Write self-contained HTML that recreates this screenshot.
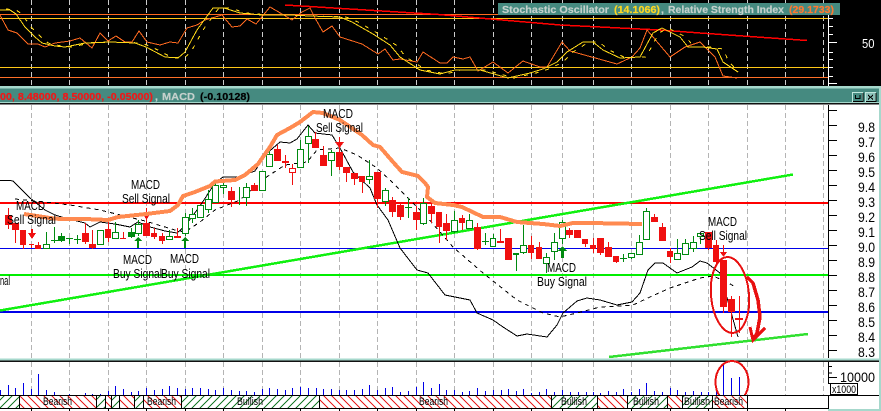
<!DOCTYPE html>
<html><head><meta charset="utf-8"><style>
html,body{margin:0;padding:0;background:#fff;width:881px;height:411px;overflow:hidden}
svg{display:block;shape-rendering:crispEdges}
text{font-family:"Liberation Sans",sans-serif}
.c{fill:#000;font-size:12.5px}
.a{fill:#000;font-size:14px}
.t{font-size:10.5px;font-weight:bold;fill:currentColor;stroke:currentColor;stroke-width:.2px}
.s{fill:#000;font-size:11px}
</style></head><body>
<svg width="881" height="411" viewBox="0 0 881 411" xmlns="http://www.w3.org/2000/svg">
<defs>
<pattern id="bull" patternUnits="userSpaceOnUse" width="8" height="8"><path d="M-1 9L9 -1M-1 1L1 -1M7 9L9 7" stroke="#1a7a2a" stroke-width="1"/></pattern>
<pattern id="bear" patternUnits="userSpaceOnUse" width="8" height="8"><path d="M-1 -1L9 9M-1 7L1 9M7 -1L9 1" stroke="#e82020" stroke-width="1"/></pattern>
</defs>
<rect width="881" height="411" fill="#fff"/>
<!-- top pane -->
<rect width="881" height="86" fill="#000"/>
<path d="M31.5 0V86M69.5 0V86M108.5 0V86M146.5 0V86M185.5 0V86M223.5 0V86M262.5 0V86M300.5 0V86M339.5 0V86M377.5 0V86M416.5 0V86M454.5 0V86M493.5 0V86M531.5 0V86M562.5 0V86M593.5 0V86M631.5 0V86M670.5 0V86M708.5 0V86M747.5 0V86M785.5 0V86M823.5 0V86" stroke="#ccc" stroke-dasharray="5 3" fill="none"/>
<path d="M0 14.5H828" stroke="#ff6a20"/>
<path d="M0 18.5H828M0 67.5H828" stroke="#ffc818"/>
<path d="M0 77.5H828" stroke="#ff7028"/>
<path d="M285 5L440 14.6L560 25L660 30L700 33L807 40.5" stroke="#f00" stroke-width="1.5" fill="none"/>
<path d="M0 15L8 30L17 33L28 44L38 44L45 47L55 43L70 41L80 38L92 48L100 33L108 41L116 36L125 42L132 42L139 31L147 42L160 45L170 42L178 43L187 28L197 25L205 20L222 15L232 27L240 26L247 19L256 24L270 7L282 14L292 20L302 12L310 8L315 18L323 32L332 26L340 37L362 44L378 54L385 49L393 60L400 59L417 62L423 52L440 63L447 63L453 57L463 59L470 57L478 71L493 62L508 73L523 61L540 67L547 67L562 42L570 51L617 64L632 57L640 48L647 30L670 57L685 47L700 42L715 57L723 76L737 78" stroke="#ff6a20" fill="none"/>
<path id="st" d="M0 10L10 10L16 14L25 27L35 37L42 43L55 46L65 47L85 43L110 42L135 43L146 47L165 57L178 58L185 52L197 30L213 8L224 8L240 13L262 15L290 15L310 16L340 17L352 22L373 34L390 45L400 57L420 70L440 74L455 70L480 70L508 78L530 73L543 69L557 62L567 52L583 42L593 42L603 50L620 58L640 57L653 33L662 28L670 32L680 37L688 47L703 47L717 49L723 62L738 72" stroke="#ffd818" fill="none"/>
<path d="M6 9L16 10L22 14L31 27L41 37L48 43L61 46L71 47L91 43L116 42L141 43L152 47L171 57L184 58L191 52L203 30L219 8L230 8L246 13L268 15L296 15L316 16L346 17L358 22L379 34L396 45L406 57L426 70L446 74L461 70L486 70L514 78L536 73L549 69L563 62L573 52L589 42L599 42L609 50L626 58L646 57L659 33L668 28L676 32L686 37L694 47L709 47L723 49L729 62L739 72" stroke="#ffd818" stroke-dasharray="4 7" fill="none"/>
<rect x="498" y="3" width="342" height="12" fill="#458a80"/>
<text x="502" y="13" class="t" style="color:#c4d0cc" textLength="107" lengthAdjust="spacingAndGlyphs">Stochastic Oscillator</text>
<text x="614" y="13" class="t" style="color:#ffd820" textLength="46" lengthAdjust="spacingAndGlyphs">(14.1066)</text>
<text x="661" y="13" class="t" style="color:#c4d0cc">,</text>
<text x="668" y="13" class="t" style="color:#c4d0cc" textLength="116" lengthAdjust="spacingAndGlyphs">Relative Strength Index</text>
<text x="789" y="13" class="t" style="color:#ff7830" textLength="45" lengthAdjust="spacingAndGlyphs">(29.1733)</text>
<path d="M828.5 15V86" stroke="#fff"/>
<path d="M828 18.5H833M828 26.5H833M828 34.5H833M828 42.5H837M828 52.5H833M828 59.5H833M828 67.5H833M828 76.5H833M828 83.5H837" stroke="#fff"/>
<text x="862" y="48" fill="#fff" font-size="13" textLength="12.5" lengthAdjust="spacingAndGlyphs">50</text>
<!-- title bar -->
<rect y="86" width="881" height="18" fill="#458a80"/>
<rect y="86" width="881" height="2.5" fill="#a6d8cc"/>
<rect y="102" width="881" height="1" fill="#a6d8cc"/>
<rect y="103" width="881" height="1.5" fill="#111"/>
<text x="0" y="100" class="t" style="color:#f01818" textLength="153" lengthAdjust="spacingAndGlyphs">00, 8.48000, 8.50000, -0.05000)</text>
<text x="155" y="100" class="t" style="color:#c4d0cc">,</text>
<text x="162" y="100" class="t" style="color:#c4d0cc" textLength="33" lengthAdjust="spacingAndGlyphs">MACD</text>
<text x="200" y="100" class="t" style="color:#000" textLength="50" lengthAdjust="spacingAndGlyphs">(-0.10128)</text>
<g>
<rect x="852.5" y="92.5" width="10" height="9" fill="#458a80" stroke="#bfe6dc"/><path d="M855.5 95V98.5H860V95" stroke="#000" fill="none"/><path d="M853 101.5H863V93" stroke="#000" fill="none"/>
<rect x="865.5" y="92.5" width="10" height="9" fill="#8ac0b8" stroke="#bfe6dc"/><path d="M868 95L873 99.5M873 95L868 99.5" stroke="#000"/><path d="M866 101.5H876V93" stroke="#000" fill="none"/>
</g>
<!-- main pane -->
<path d="M31.5 105V411M69.5 105V411M108.5 105V411M146.5 105V411M185.5 105V411M223.5 105V411M262.5 105V411M300.5 105V411M339.5 105V411M377.5 105V411M416.5 105V411M454.5 105V411M493.5 105V411M531.5 105V411M562.5 105V411M593.5 105V411M631.5 105V411M670.5 105V411M708.5 105V411M747.5 105V411M785.5 105V411M823.5 105V411" stroke="#b4b4b4" stroke-dasharray="5 3" fill="none"/>
<path d="M0 203H828" stroke="#f00" stroke-width="2"/>
<path d="M0 248.5H828" stroke="#0000e8" stroke-width="1"/>
<path d="M0 275H828" stroke="#00ee00" stroke-width="2"/>
<path d="M0 312H828" stroke="#0000e8" stroke-width="2"/>
<path d="M0 310.5L793 174.5" stroke="#10f010" stroke-width="2.5" fill="none"/>
<path d="M609 357L808 334" stroke="#30e030" stroke-width="2.5" fill="none"/>
<!-- MA lines -->
<path d="M0 180.5L10 180.5L13 181L20 188L30 198L45 210L55 215L65 218L85 223L90 227L100 222L115 224L130 227L138 222L150 227L165 231L177 233L185 226L200 206L215 183L223 177L238 177L255 171L265 155L280 142L290 143L297 139L308 125L315 133L332 135L340 148L353 172L370 188L377 205L388 220L400 248L417 270L428 273L445 295L470 300L477 313L493 320L503 327L517 336L527 334L547 337L557 325L563 313L577 301L587 298L600 300L617 305L632 302L640 293L648 270L655 263L663 263L677 273L692 267L700 261L707 263L720 273L738 337" stroke="#000" fill="none"/>
<path d="M15 199L45 202L70 205L100 210L145 221L175 230L185 232L200 222L215 210L240 200L262 180L285 165L307 162L317 150L340 148L357 155L377 168L390 180L410 200L427 217L453 247L483 273L517 300L543 313L560 317L577 313L600 307L620 306L633 305L650 297L670 288L700 278L713 276L727 282L735 287" stroke="#000" stroke-dasharray="4 4" fill="none"/>
<!-- red wicks -->
<path d="M8.500 208V229M15.500 223V243M23.500 230V249M31.500 244V248M38.500 242V249M85.500 223V244M92.500 230V249M108.500 221V242M123.500 232V238M146.500 210V236M154.500 228V239M162.500 233V244M177.500 228V237M231.500 187V207M254.500 183V191M277.500 145V161M285.500 155V168M292.500 164V185M315.500 132V148M323.500 146V166M339.500 137V170M346.500 167V182M354.500 173V185M362.500 176V193M377.500 172V208M392.500 197V217M400.500 203V220M416.500 206V230M431.500 202V223M439.500 212V243M446.500 214V240M462.500 215V230M477.500 223V250M500.500 229V242M508.500 238V260M531.500 236V259M539.500 242V259M569.500 228V238M577.500 230V238M585.500 239V247M593.500 238V253M600.500 238V255M608.500 242V257M616.500 256V263M654.500 214V222M662.500 223V241M670.500 248V263M708.500 232V250M716.500 240V266M723.500 260V313M731.500 296V337M739.500 296V333" stroke="#f01010" fill="none"/>
<path d="M5 215h7v10h-7zM12 223h7v7h-7zM20 230h6v15h-6zM29 244h5v1h-5zM35 245h6v4h-6zM82 233h7v9h-7zM89 244h7v4h-7zM105 229h6v9h-6zM120 238h6v1h-6zM143 223h7v13h-7zM151 233h6v4h-6zM159 236h6v5h-6zM174 236h7v2h-7zM228 191h7v9h-7zM251 185h7v6h-7zM274 149h7v12h-7zM282 161h7v2h-7zM312 139h7v9h-7zM320 155h7v11h-7zM336 152h7v15h-7zM343 167h7v6h-7zM351 173h7v6h-7zM359 176h6v6h-6zM374 172h7v27h-7zM389 200h7v12h-7zM397 205h7v12h-7zM413 212h7v8h-7zM428 206h7v8h-7zM436 212h6v15h-6zM443 223h7v8h-7zM459 218h6v5h-6zM474 227h7v22h-7zM497 241h7v2h-7zM505 238h7v22h-7zM528 245h6v8h-6zM536 247h6v12h-6zM566 230h7v5h-7zM574 230h7v8h-7zM582 239h6v5h-6zM590 245h6v4h-6zM597 238h7v15h-7zM605 247h7v10h-7zM613 256h6v6h-6zM651 217h7v5h-7zM659 227h7v14h-7zM667 251h6v6h-6zM705 232h7v16h-7zM713 245h6v17h-6zM720 260h7v47h-7zM728 299h7v13h-7zM735 318h8v2h-8z" fill="#f01010"/>
<rect x="289.500" y="168.500" width="6" height="4" fill="#fff" stroke="#f01010"/>
<!-- red arrows -->
<path d="M31 229v4h-3l4 6 4-6h-3v-4zM146 208v6h-3l3.500 6 3.500-6h-3v-6zM339 137v5h-4l4.500 6 4.500-6h-4v-5zM723 245v7h-3l3.500 5 3.500-5h-3v-7z" fill="#f01010"/>
<!-- green wicks -->
<path d="M46.500 232V248M54.500 227V243M61.500 233V242M69.500 238V244M77.500 235V244M100.500 230V245M115.500 222V238M131.500 228V238M138.500 220V236M169.500 230V239M185.500 213V236M192.500 208V223M208.500 190V213M215.500 183V203M223.500 182V194M239.500 187V205M246.500 183V206M262.500 171V190M269.500 150V166M300.500 140V168M308.500 126V163M331.500 150V176M369.500 160V184M385.500 188V206M408.500 198V218M423.500 198V225M454.500 211V233M469.500 214V229M485.500 233V245M493.500 234V246M516.500 253V271M523.500 225V254M546.500 253V273M554.500 233V260M562.500 220V244M623.500 254V262M631.500 253V259M639.500 235V254M646.500 208V239M677.500 239V259M685.500 239V255M693.500 236V252M700.500 233V244" stroke="#008a10" fill="none"/>
<path d="M51 240h7v1h-7zM66 238h7v1h-7zM74 239h7v1h-7zM405 207h7v1h-7zM482 241h7v1h-7zM620 258h7v1h-7z" fill="#008a10"/>
<path d="M58 236h7v5h-7zM128 232h7v5h-7zM513 253h6v2h-6z" fill="#008a10"/>
<path d="M43.500 244.500h6v4h-6zM97.500 230.500h6v14h-6zM112.500 232.500h6v6h-6zM135.500 224.500h6v9h-6zM166.500 236.500h6v3h-6zM182.500 217.500h6v16h-6zM189.500 214.500h6v4h-6zM197.500 205.500h6v12h-6zM205.500 199.500h6v10h-6zM212.500 185.500h6v17h-6zM220.500 185.500h6v2h-6zM243.500 187.500h6v10h-6zM259.500 171.500h6v19h-6zM266.500 154.500h6v12h-6zM297.500 149.500h6v18h-6zM305.500 136.500h6v7h-6zM328.500 152.500h6v8h-6zM366.500 176.500h6v3h-6zM382.500 190.500h6v11h-6zM420.500 203.500h6v20h-6zM451.500 220.500h6v11h-6zM466.500 220.500h6v8h-6zM490.500 238.500h5v8h-5zM520.500 245.500h6v7h-6zM543.500 257.500h6v6h-6zM551.500 242.500h6v9h-6zM559.500 222.500h6v16h-6zM628.500 253.500h6v4h-6zM636.500 242.500h6v12h-6zM643.500 211.500h6v28h-6zM674.500 253.500h6v6h-6zM682.500 243.500h6v11h-6zM690.500 242.500h6v6h-6zM697.500 233.500h6v3h-6z" fill="#fff" stroke="#008a10"/>
<!-- green arrows -->
<path d="M137 248v-7h-3l4-4 4 4h-3v7zM184 248v-7h-3l4-4 4 4h-3v7zM561 258v-7h-3l4.500-5 4.500 5h-3v7z" fill="#008a10"/>
<!-- orange hand line -->
<path d="M24 214L50 218L60 219L85 219L108 220L118 217L146 214L170 211L178 205L183 196L195 192L210 186L215 181.500L235 180L245 175L258 164L270 147L277 135L290 128L300 122L313 112L323 113L340 120L362 135L373 145L380 147L393 162L402 172L418 176L425 183L428 187L427 197L435 203L453 205L462 207L483 217L500 217L517 222L543 224L560 226L573 223L590 223L642 224" stroke="#ff8a50" stroke-width="4" fill="none"/>
<!-- labels -->
<text class="c" x="131" y="189" textLength="29" lengthAdjust="spacingAndGlyphs">MACD</text>
<text class="c" x="122" y="203" textLength="48" lengthAdjust="spacingAndGlyphs">Sell Signal</text>
<text class="c" x="16" y="210" textLength="29" lengthAdjust="spacingAndGlyphs">MACD</text>
<text class="c" x="7" y="224" textLength="49" lengthAdjust="spacingAndGlyphs">Sell Signal</text>
<text class="c" x="123" y="264" textLength="29" lengthAdjust="spacingAndGlyphs">MACD</text>
<text class="c" x="113" y="278" textLength="49" lengthAdjust="spacingAndGlyphs">Buy Signal</text>
<text class="c" x="170" y="263" textLength="29" lengthAdjust="spacingAndGlyphs">MACD</text>
<text class="c" x="161" y="278" textLength="49" lengthAdjust="spacingAndGlyphs">Buy Signal</text>
<text class="c" x="0" y="285" textLength="10" lengthAdjust="spacingAndGlyphs">nal</text>
<text class="c" x="323" y="118" textLength="30" lengthAdjust="spacingAndGlyphs">MACD</text>
<text class="c" x="316" y="132" textLength="47" lengthAdjust="spacingAndGlyphs">Sell Signal</text>
<text class="c" x="547" y="272" textLength="29" lengthAdjust="spacingAndGlyphs">MACD</text>
<text class="c" x="537" y="286" textLength="50" lengthAdjust="spacingAndGlyphs">Buy Signal</text>
<text class="c" x="708" y="226" textLength="29" lengthAdjust="spacingAndGlyphs">MACD</text>
<text class="c" x="699" y="240" textLength="48" lengthAdjust="spacingAndGlyphs">Sell Signal</text>
<!-- red annotations -->
<ellipse cx="730" cy="295" rx="19" ry="38" transform="rotate(-5 730 295)" fill="none" stroke="#e81010" stroke-width="2"/>
<path d="M747 277L753 283L758 300L760 317L757 333L753 340" stroke="#e81010" stroke-width="3.500" fill="none"/>
<path d="M750 327L753 340L765 328" stroke="#e81010" stroke-width="3" fill="none"/>
<!-- volume pane -->
<rect x="0" y="358.500" width="881" height="2" fill="#a6d8cc"/>
<rect x="0" y="360.500" width="881" height="1.500" fill="#111"/>
<rect x="0" y="362" width="828" height="33" fill="#fff"/>
<path d="M31.5 362V395M69.5 362V395M108.5 362V395M146.5 362V395M185.5 362V395M223.5 362V395M262.5 362V395M300.5 362V395M339.5 362V395M377.5 362V395M416.5 362V395M454.5 362V395M493.5 362V395M531.5 362V395M562.5 362V395M593.5 362V395M631.5 362V395M670.5 362V395M708.5 362V395M747.5 362V395M785.5 362V395M823.5 362V395" stroke="#b4b4b4" stroke-dasharray="5 3"/>
<path d="M0.500 390V395M8.500 385V395M15.500 388V395M23.500 383V395M31.500 389V395M38.500 374V395M46.500 390V395M54.500 392V395M69.500 394V395M85.500 393V395M92.500 394V395M100.500 394V395M108.500 391V395M115.500 386V395M123.500 389V395M131.500 392V395M138.500 391V395M146.500 388V395M154.500 390V395M162.500 389V395M169.500 386V395M177.500 388V395M185.500 389V395M192.500 388V395M200.500 388V395M208.500 389V395M215.500 390V395M223.500 388V395M231.500 390V395M239.500 391V395M246.500 391V395M254.500 392V395M262.500 389V395M269.500 388V395M277.500 389V395M285.500 390V395M292.500 388V395M300.500 387V395M308.500 388V395M316.500 388V395M323.500 389V395M331.500 389V395M339.500 390V395M346.500 390V395M354.500 390V395M362.500 389V395M369.500 385V395M377.500 390V395M385.500 388V395M392.500 387V395M400.500 392V395M408.500 391V395M416.500 387V395M423.500 382V395M431.500 388V395M439.500 384V395M446.500 390V395M454.500 390V395M462.500 392V395M469.500 391V395M477.500 388V395M485.500 391V395M493.500 390V395M501.500 390V395M508.500 389V395M516.500 391V395M523.500 389V395M531.500 393V395M539.500 392V395M546.500 389V395M554.500 392V395M562.500 390V395M570.500 392V395M578.500 392V395M586.500 392V395M593.500 392V395M600.500 393V395M608.500 391V395M616.500 392V395M623.500 389V395M631.500 392V395M639.500 389V395M646.500 383V395M654.500 391V395M662.500 392V395M670.500 388V395M677.500 390V395M685.500 392V395M693.500 391V395M701.500 392V395M708.500 392V395M716.500 390V395M723.500 363V395M731.500 378V395M739.500 377V395" stroke="#0000e8" fill="none"/>
<ellipse cx="732" cy="382" rx="16.500" ry="21" fill="none" stroke="#e81010" stroke-width="2"/>
<!-- trend band -->
<rect x="0" y="395" width="828" height="16" fill="#fff"/>
<rect x="0" y="395" width="19" height="13" fill="url(#bull)"/>
<rect x="19" y="395" width="77" height="13" fill="url(#bear)"/>
<rect x="96" y="395" width="9" height="13" fill="url(#bull)"/>
<rect x="105" y="395" width="6" height="13" fill="url(#bear)"/>
<rect x="111" y="395" width="8" height="13" fill="url(#bull)"/>
<rect x="119" y="395" width="15" height="13" fill="url(#bear)"/>
<rect x="134" y="395" width="9" height="13" fill="url(#bull)"/>
<rect x="143" y="395" width="38" height="13" fill="url(#bear)"/>
<rect x="181" y="395" width="138" height="13" fill="url(#bull)"/>
<rect x="319" y="395" width="232" height="13" fill="url(#bear)"/>
<rect x="551" y="395" width="46" height="13" fill="url(#bull)"/>
<rect x="597" y="395" width="30" height="13" fill="url(#bear)"/>
<rect x="627" y="395" width="40" height="13" fill="url(#bull)"/>
<rect x="667" y="395" width="15" height="13" fill="url(#bear)"/>
<rect x="682" y="395" width="30" height="13" fill="url(#bull)"/>
<rect x="712" y="395" width="35" height="13" fill="url(#bear)"/>
<path d="M0 395.500H879M0 408.500H828M19.500 395V408M96.500 395V408M105.500 395V408M111.500 395V408M119.500 395V408M134.500 395V408M143.500 395V408M181.500 395V408M319.500 395V408M551.500 395V408M597.500 395V408M627.500 395V408M667.500 395V408M682.500 395V408M712.500 395V408M747.500 395V408" stroke="#000" fill="none"/>
<path d="M31.5 409V411M69.5 409V411M108.5 409V411M146.5 409V411M185.5 409V411M223.5 409V411M262.5 409V411M300.5 409V411M339.5 409V411M377.5 409V411M416.5 409V411M454.5 409V411M493.5 409V411M531.5 409V411M562.5 409V411M593.5 409V411M631.5 409V411M670.5 409V411M708.5 409V411M747.5 409V411M785.5 409V411" stroke="#000"/>
<text class="s" x="43" y="405" textLength="29" lengthAdjust="spacingAndGlyphs">Bearish</text>
<text class="s" x="147" y="405" textLength="29" lengthAdjust="spacingAndGlyphs">Bearish</text>
<text class="s" x="237" y="405" textLength="26" lengthAdjust="spacingAndGlyphs">Bullish</text>
<text class="s" x="419" y="405" textLength="29" lengthAdjust="spacingAndGlyphs">Bearish</text>
<text class="s" x="561" y="405" textLength="26" lengthAdjust="spacingAndGlyphs">Bullish</text>
<text class="s" x="633" y="405" textLength="26" lengthAdjust="spacingAndGlyphs">Bullish</text>
<text class="s" x="684" y="405" textLength="26" lengthAdjust="spacingAndGlyphs">Bullish</text>
<text class="s" x="714" y="405" textLength="29" lengthAdjust="spacingAndGlyphs">Bearish</text>
<!-- axis -->
<path d="M828.5 105V358M828.5 362V383M828.5 396V411" stroke="#000"/>
<path d="M828 110.500H837M828 125.500H837M828 140.500H837M828 155.500H837M828 170.500H837M828 185.500H837M828 200.500H837M828 215.500H837M828 230.500H837M828 245.500H837M828 260.500H837M828 275.500H837M828 290.500H837M828 305.500H837M828 320.500H837M828 335.500H837M828 350.500H837M828 366.500H832M828 373H832M828 377.500H837M828 383.500H832" stroke="#000"/>
<g>
<text class="a" x="858" y="132" textLength="17" lengthAdjust="spacingAndGlyphs">9.8</text>
<text class="a" x="858" y="147" textLength="17" lengthAdjust="spacingAndGlyphs">9.7</text>
<text class="a" x="858" y="162" textLength="17" lengthAdjust="spacingAndGlyphs">9.6</text>
<text class="a" x="858" y="177" textLength="17" lengthAdjust="spacingAndGlyphs">9.5</text>
<text class="a" x="858" y="192" textLength="17" lengthAdjust="spacingAndGlyphs">9.4</text>
<text class="a" x="858" y="207" textLength="17" lengthAdjust="spacingAndGlyphs">9.3</text>
<text class="a" x="858" y="222" textLength="17" lengthAdjust="spacingAndGlyphs">9.2</text>
<text class="a" x="858" y="237" textLength="17" lengthAdjust="spacingAndGlyphs">9.1</text>
<text class="a" x="858" y="252" textLength="17" lengthAdjust="spacingAndGlyphs">9.0</text>
<text class="a" x="858" y="267" textLength="17" lengthAdjust="spacingAndGlyphs">8.9</text>
<text class="a" x="858" y="282" textLength="17" lengthAdjust="spacingAndGlyphs">8.8</text>
<text class="a" x="858" y="297" textLength="17" lengthAdjust="spacingAndGlyphs">8.7</text>
<text class="a" x="858" y="312" textLength="17" lengthAdjust="spacingAndGlyphs">8.6</text>
<text class="a" x="858" y="327" textLength="17" lengthAdjust="spacingAndGlyphs">8.5</text>
<text class="a" x="858" y="342" textLength="17" lengthAdjust="spacingAndGlyphs">8.4</text>
<text class="a" x="858" y="357" textLength="17" lengthAdjust="spacingAndGlyphs">8.3</text>
<text class="a" x="840" y="382" textLength="35" lengthAdjust="spacingAndGlyphs">10000</text>
</g>
<rect x="830.500" y="383.500" width="27" height="11" fill="#fff" stroke="#000"/>
<text x="832" y="393" class="s" textLength="24" lengthAdjust="spacingAndGlyphs">x1000</text>
<!-- frame -->
<rect x="879" y="86" width="2" height="325" fill="#a6d8cc"/>
<rect x="828" y="409" width="53" height="2" fill="#a6d8cc"/>
</svg>
</body></html>
